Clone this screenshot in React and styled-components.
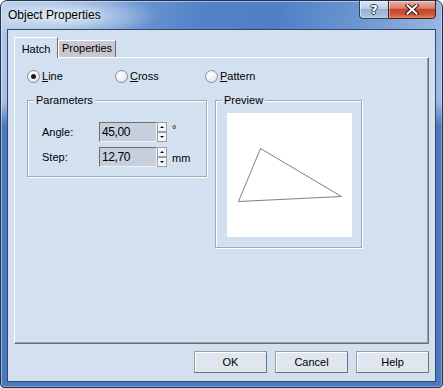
import React from "react";
import styled, { createGlobalStyle } from "styled-components";

const GlobalStyle = createGlobalStyle`
  html, body { margin: 0; padding: 0; background: #ffffff; }
  body { font-family: "Liberation Sans", Arial, sans-serif; }
  * { box-sizing: border-box; }
`;

const CLIENT = "#d3e0f0";

const Window = styled.div`
  width: 443px;
  height: 388px;
  border: 1px solid #22344f;
  border-radius: 7px 7px 4px 4px;
  display: flex;
  flex-direction: column;
  overflow: hidden;
  background:
    radial-gradient(ellipse 95px 22px at 62px 15px, rgba(226, 236, 248, 0.95), rgba(226, 236, 248, 0) 100%),
    linear-gradient(180deg, rgba(74, 120, 189, 0) 0px, rgba(74, 120, 189, 0) 100px, #4a78bd 125px, #4a78bd 100%),
    linear-gradient(100deg, #b4cbe8 0%, #7ea3d8 18%, #5282c8 40%, #4f80c6 55%, #6e97d3 72%, #9bb8e2 88%, #a9c3e6 100%);
  box-shadow: inset 1px 1px 0 rgba(255, 255, 255, 0.45), inset -1px -1px 0 rgba(255, 255, 255, 0.3);
`;

const TitleBar = styled.div`
  height: 28px;
  flex: none;
  display: flex;
  align-items: flex-start;
  padding-left: 7px;
`;

const Title = styled.div`
  flex: 1;
  font-size: 12px;
  line-height: 28px;
  color: #000;
  text-shadow: 0 0 6px rgba(255, 255, 255, 0.9);
`;

const CaptionButtons = styled.div`
  display: flex;
  margin-top: -1px;
  margin-right: 6px;
`;

const HelpButton = styled.div`
  width: 29px;
  height: 19px;
  border: 1px solid #2f4260;
  border-right: none;
  border-radius: 0 0 0 4px;
  background: linear-gradient(180deg, #dae5f2 0%, #bccde4 45%, #97b1d4 50%, #a7bfdd 85%, #bcd0e9 100%);
  box-shadow: inset 1px 1px 0 rgba(255, 255, 255, 0.5);
  display: flex;
  align-items: center;
  justify-content: center;
  color: #fff;
  font-family: "DejaVu Sans", sans-serif;
  font-weight: bold;
  font-size: 13px;
  line-height: 17px;
  text-shadow: 1px 0 0 #2b3a52, -1px 0 0 #2b3a52, 0 1px 0 #2b3a52, 0 -1px 0 #2b3a52;
`;

const CloseButton = styled.div`
  width: 48px;
  height: 19px;
  border: 1px solid #4a1d16;
  border-radius: 0 0 4px 0;
  background: linear-gradient(180deg, #eab0a2 0%, #d9806d 42%, #c7442c 50%, #cf5738 80%, #e08866 100%);
  box-shadow: inset 1px 1px 0 rgba(255, 255, 255, 0.4);
  display: flex;
  align-items: center;
  justify-content: center;
`;

const Client = styled.div`
  flex: 1;
  margin: 0 6px 5px 6px;
  border: 1px solid #34496a;
  background: ${CLIENT};
  display: flex;
  flex-direction: column;
  padding: 7px 6px 8px 6px;
`;

const TabStrip = styled.div`
  height: 20px;
  flex: none;
  display: flex;
  align-items: flex-end;
`;

const Tab = styled.div`
  position: relative;
  z-index: ${(p) => (p.$active ? 1 : 0)};
  width: ${(p) => p.$w}px;
  height: ${(p) => (p.$active ? 21 : 17)}px;
  margin-bottom: ${(p) => (p.$active ? -1 : 0)}px;
  padding-top: ${(p) => (p.$active ? 5 : 1)}px;
  border-top: 1px solid #ffffff;
  border-left: 1px solid #ffffff;
  border-right: 1px solid #6e6e6e;
  background: ${(p) => (p.$active ? CLIENT : "#cbc7d0")};
  font-size: 11px;
  line-height: 13px;
  text-align: center;
  color: #000;
`;

const Panel = styled.div`
  flex: 1;
  border: 1px solid;
  border-color: #ffffff #6e6e6e #6e6e6e #ffffff;
  box-shadow: inset -1px -1px 0 #a0a0a0;
  background: ${CLIENT};
  padding: 12px 0 0 12px;
  display: flex;
  flex-direction: column;
`;

const RadioRow = styled.div`
  display: flex;
  height: 13px;
`;

const RadioItem = styled.div`
  width: ${(p) => p.$w}px;
  display: flex;
  align-items: center;
  gap: 2px;
  font-size: 11px;
  line-height: 13px;
  color: #000;
`;

const RadioCircle = styled.span`
  width: 13px;
  height: 13px;
  border-radius: 50%;
  border: 1px solid #8b8e93;
  background: radial-gradient(circle at 40% 35%, #ffffff 0%, #eceef1 55%, #cfd2d6 100%);
  display: flex;
  align-items: center;
  justify-content: center;
  flex: none;
  &::after {
    content: "";
    width: 5px;
    height: 5px;
    border-radius: 50%;
    background: ${(p) => (p.$checked ? "#151a22" : "transparent")};
  }
`;

const GroupRow = styled.div`
  display: flex;
  align-items: flex-start;
  gap: 8px;
  margin-top: 17px;
`;

const GroupBox = styled.div`
  position: relative;
  width: ${(p) => p.$w}px;
  border: 1px solid #a3a9b1;
  box-shadow: 1px 1px 0 #ffffff, inset 1px 1px 0 #ffffff;
  padding: ${(p) => p.$pad};
`;

const GroupLabel = styled.span`
  position: absolute;
  top: -7px;
  left: 6px;
  padding: 0 2px;
  background: ${CLIENT};
  font-size: 11px;
  line-height: 13px;
  color: #000;
`;

const FieldRows = styled.div`
  display: flex;
  flex-direction: column;
  gap: 5px;
`;

const FieldRow = styled.div`
  display: flex;
  align-items: center;
  height: 20px;
`;

const FieldLabel = styled.span`
  width: 57px;
  font-size: 11px;
  line-height: 13px;
  color: #000;
`;

const NumberBox = styled.div`
  width: 58px;
  height: 20px;
  border: 1px solid;
  border-color: #6b6e73 #eef2f7 #eef2f7 #6b6e73;
  background: #c6cfdb;
  padding-left: 2px;
  font-size: 12px;
  line-height: 18px;
  letter-spacing: -0.4px;
  color: #000;
`;

const Spinner = styled.div`
  width: 10px;
  height: 20px;
  display: flex;
  flex-direction: column;
  gap: 0;
`;

const SpinButton = styled.div`
  height: 10px;
  border: 1px solid #9ba0a7;
  background: #f3f5f8;
  display: flex;
  align-items: center;
  justify-content: center;
  &::after {
    content: "";
    border-left: 2px solid transparent;
    border-right: 2px solid transparent;
    ${(p) =>
      p.$up
        ? "border-bottom: 2px solid #000;"
        : "border-top: 2px solid #000;"}
  }
`;

const Unit = styled.span`
  margin-left: 5px;
  font-size: 11px;
  line-height: 13px;
  color: #000;
  align-self: ${(p) => (p.$top ? "flex-start" : "center")};
  margin-top: ${(p) => (p.$top ? "1px" : "2px")};
`;

const PreviewCanvas = styled.div`
  width: 125px;
  height: 124px;
  background: #ffffff;
`;

const ButtonRow = styled.div`
  flex: none;
  display: flex;
  justify-content: flex-end;
  gap: 8px;
  margin-top: 7px;
`;

const DialogButton = styled.div`
  width: 73px;
  height: 22px;
  border: 1px solid;
  border-color: #9a9ea4 #6f7378 #6f7378 #9a9ea4;
  box-shadow: inset 1px 1px 0 #ffffff;
  background: #dfe6f0;
  font-size: 11px;
  line-height: 20px;
  text-align: center;
  color: #000;
`;

function SpinField({ label, value, unit, unitTop }) {
  return (
    <FieldRow>
      <FieldLabel>{label}</FieldLabel>
      <NumberBox>{value}</NumberBox>
      <Spinner>
        <SpinButton $up />
        <SpinButton />
      </Spinner>
      <Unit $top={unitTop}>{unit}</Unit>
    </FieldRow>
  );
}

export default function App() {
  return (
    <>
      <GlobalStyle />
      <Window>
        <TitleBar>
          <Title>Object Properties</Title>
          <CaptionButtons>
            <HelpButton>?</HelpButton>
            <CloseButton>
              <svg width="14" height="11" viewBox="0 0 14 11">
                <path d="M2.5 1.5 L11.5 9.5 M11.5 1.5 L2.5 9.5" stroke="#3a1510" strokeWidth="4" strokeLinecap="square" />
                <path d="M2.5 1.5 L11.5 9.5 M11.5 1.5 L2.5 9.5" stroke="#ffffff" strokeWidth="2" strokeLinecap="square" />
              </svg>
            </CloseButton>
          </CaptionButtons>
        </TitleBar>
        <Client>
          <TabStrip>
            <Tab $active $w={44}>Hatch</Tab>
            <Tab $w={58}>Properties</Tab>
          </TabStrip>
          <Panel>
            <RadioRow>
              <RadioItem $w={88}>
                <RadioCircle $checked />
                <span><u>L</u>ine</span>
              </RadioItem>
              <RadioItem $w={90}>
                <RadioCircle />
                <span><u>C</u>ross</span>
              </RadioItem>
              <RadioItem $w={80}>
                <RadioCircle />
                <span><u>P</u>attern</span>
              </RadioItem>
            </RadioRow>
            <GroupRow>
              <GroupBox $w={180} $pad="21px 0 9px 14px">
                <GroupLabel>Parameters</GroupLabel>
                <FieldRows>
                  <SpinField label="Angle:" value="45,00" unit="°" unitTop />
                  <SpinField label="Step:" value="12,70" unit="mm" />
                </FieldRows>
              </GroupBox>
              <GroupBox $w={147} $pad="12px 9px 10px 11px">
                <GroupLabel>Preview</GroupLabel>
                <PreviewCanvas>
                  <svg width="125" height="124" viewBox="0 0 125 124">
                    <polygon points="33.5,35.5 114.5,83.5 11.5,88.5" fill="none" stroke="#808080" strokeWidth="1" />
                  </svg>
                </PreviewCanvas>
              </GroupBox>
            </GroupRow>
          </Panel>
          <ButtonRow>
            <DialogButton>OK</DialogButton>
            <DialogButton>Cancel</DialogButton>
            <DialogButton>Help</DialogButton>
          </ButtonRow>
        </Client>
      </Window>
    </>
  );
}
